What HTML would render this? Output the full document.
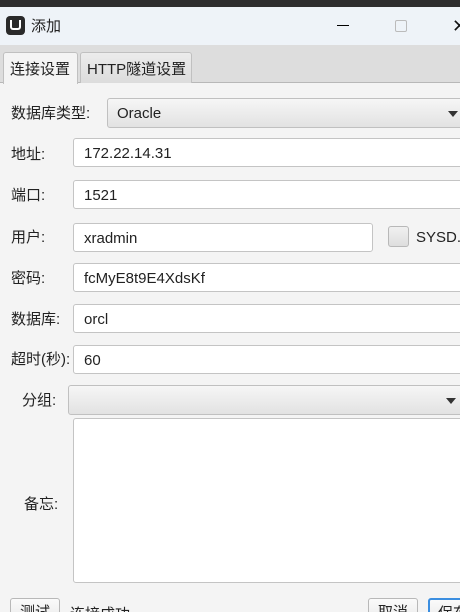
<!DOCTYPE html>
<html><head><meta charset="utf-8"><style>
*{box-sizing:border-box;margin:0;padding:0}
html{width:460px;height:612px;overflow:hidden}
body{width:460px;height:612px;overflow:hidden;background:#f4f4f4;font-family:"Liberation Sans","Noto Sans CJK SC",sans-serif;font-size:15px;color:#222;position:relative}
.a{position:absolute}
.f{position:absolute;background:#fff;border:1px solid #c4c4c4;border-radius:3px;height:29px;padding-left:10px;line-height:29px;color:#222}
.l{position:absolute;line-height:20px;margin-top:1px}
.cb{position:absolute;background:linear-gradient(#f6f6f6,#e2e2e2);border:1px solid #c0c0c0;border-radius:3px;height:30px;line-height:30px;padding-left:9px}
.arr{position:absolute;right:0;top:12px;width:0;height:0;border-left:5px solid transparent;border-right:5px solid transparent;border-top:6px solid #333}
.btn{position:absolute;background:linear-gradient(#fafafa,#e6e6e6);border:1px solid #b8b8b8;border-radius:3px;height:30px;line-height:28px;text-align:center}
</style></head><body>
<div class="a" style="left:0;top:0;width:460px;height:7px;background:#2e2e2e"></div>
<div class="a" style="left:0;top:7px;width:460px;height:38px;background:#eef3f8"></div>
<div class="a" style="left:6px;top:16px;width:19px;height:19px;background:#2a2a2a;border-radius:4px"><div class="a" style="left:4px;top:4px;width:11px;height:10px;border:2px solid #fff;border-top:none;border-radius:0 0 3px 3px"></div></div>
<div class="l" style="left:31px;top:16px;font-size:15px">添加</div>
<div class="a" style="left:337px;top:25px;width:12px;height:1px;background:#000"></div>
<div class="a" style="left:395px;top:20px;width:12px;height:12px;border:1px solid #bbb;border-radius:2px"></div>
<div class="l" style="left:452px;top:15px;font-size:18px;color:#111">✕</div>
<div class="a" style="left:0;top:45px;width:460px;height:38px;background:#dddddd;border-bottom:1px solid #b8b8b8"></div>
<div class="a" style="left:3px;top:52px;width:75px;height:32px;background:#f4f4f4;border:1px solid #c0c0c0;border-bottom:none;border-radius:3px 3px 0 0"></div>
<div class="l" style="left:10px;top:59px">连接设置</div>
<div class="a" style="left:80px;top:52px;width:112px;height:31px;background:linear-gradient(#ececec,#dcdcdc);border:1px solid #c0c0c0;border-bottom:none;border-radius:3px 3px 0 0"></div>
<div class="l" style="left:87px;top:59px">HTTP隧道设置</div>

<div class="l" style="left:11px;top:103px">数据库类型:</div>
<div class="cb" style="left:107px;top:98px;width:362px">Oracle<div class="arr" style="right:10px"></div></div>

<div class="l" style="left:11px;top:144px">地址:</div>
<div class="f" style="left:73px;top:138px;width:400px">172.22.14.31</div>
<div class="l" style="left:11px;top:185px">端口:</div>
<div class="f" style="left:73px;top:180px;width:400px">1521</div>
<div class="l" style="left:11px;top:227px">用户:</div>
<div class="f" style="left:73px;top:223px;width:300px">xradmin</div>
<div class="a" style="left:388px;top:226px;width:21px;height:21px;background:linear-gradient(#f0f0f0,#dedede);border:1px solid #b8b8b8;border-radius:3px"></div>
<div class="l" style="left:416px;top:227px">SYSD..</div>
<div class="l" style="left:11px;top:268px">密码:</div>
<div class="f" style="left:73px;top:263px;width:400px">fcMyE8t9E4XdsKf</div>
<div class="l" style="left:11px;top:309px">数据库:</div>
<div class="f" style="left:73px;top:304px;width:400px">orcl</div>
<div class="l" style="left:11px;top:349px">超时(秒):</div>
<div class="f" style="left:73px;top:345px;width:400px">60</div>
<div class="l" style="left:22px;top:390px">分组:</div>
<div class="cb" style="left:68px;top:385px;width:402px"><div class="arr" style="right:13px"></div></div>
<div class="a" style="left:73px;top:418px;width:400px;height:165px;background:#fff;border:1px solid #c4c4c4;border-radius:3px"></div>
<div class="l" style="left:24px;top:494px">备忘:</div>

<div class="btn" style="left:10px;top:598px;width:50px">测试</div>
<div class="l" style="left:70px;top:604px">连接成功</div>
<div class="btn" style="left:368px;top:598px;width:50px">取消</div>
<div class="btn" style="left:428px;top:598px;width:50px;border:2px solid #3b8ee0">保存</div>
</body></html>
